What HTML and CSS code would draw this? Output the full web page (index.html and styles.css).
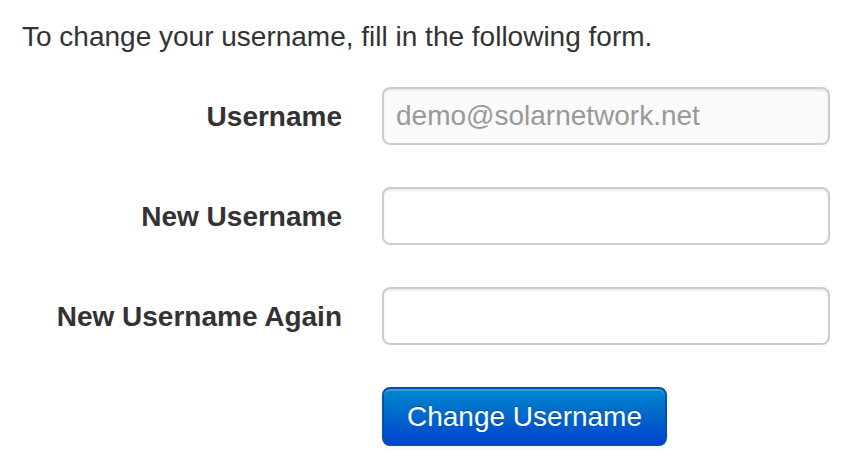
FILE: index.html
```html
<!DOCTYPE html>
<html>
<head>
<meta charset="utf-8">
<link rel="stylesheet" href="styles.css">
</head>
<body>
<div class="page">
  <p class="intro">To change your username, fill in the following form.</p>
  <form class="form">
    <div class="group">
      <label class="label">Username</label>
      <div class="controls"><input class="input input-disabled" type="text" value="demo@solarnetwork.net" disabled></div>
    </div>
    <div class="group">
      <label class="label">New Username</label>
      <div class="controls"><input class="input" type="text"></div>
    </div>
    <div class="group">
      <label class="label">New Username Again</label>
      <div class="controls"><input class="input" type="text"></div>
    </div>
    <div class="group">
      <div class="label"></div>
      <div class="controls"><button class="btn" type="button">Change Username</button></div>
    </div>
  </form>
</div>
</body>
</html>
```
FILE: styles.css
```css
html, body {
  margin: 0;
  padding: 0;
  background: #fff;
}
body {
  font-family: "Liberation Sans", Arial, sans-serif;
  font-size: 28px;
  line-height: 40px;
  color: #333;
}
.page {
  padding: 17px 22px 0 22px;
}
.intro {
  margin: 0 0 30px 0;
}
.form {
  margin: 0;
}
.group {
  display: flex;
  margin-bottom: 42px;
}
.label {
  width: 320px;
  flex: none;
  text-align: right;
  font-weight: bold;
  padding-top: 10px;
  box-sizing: border-box;
}
.controls {
  margin-left: 40px;
}
.input {
  box-sizing: border-box;
  width: 448px;
  height: 58px;
  padding: 8px 12px;
  border: 2px solid #ccc;
  border-radius: 8px;
  font-family: "Liberation Sans", Arial, sans-serif;
  font-size: 28px;
  line-height: 40px;
  color: #555;
  background: #fff;
  box-shadow: inset 0 2px 2px rgba(0,0,0,0.075);
  margin: 0;
  display: block;
}
.input-disabled {
  background: #fafafa;
  color: #999;
  -webkit-text-fill-color: #999;
  opacity: 1;
}
.btn {
  box-sizing: border-box;
  width: 285px;
  height: 59px;
  padding: 8px 0;
  text-align: center;
  font-family: "Liberation Sans", Arial, sans-serif;
  font-size: 28px;
  line-height: 40px;
  color: #fff;
  border: 2px solid #0050b8;
  border-radius: 8px;
  background: linear-gradient(to bottom, #0088cc, #0044cc);
  text-shadow: 0 -1px 0 rgba(0,0,0,0.25);
  box-shadow: inset 0 2px 0 rgba(255,255,255,0.2), 0 2px 4px rgba(0,0,0,0.05);
  margin: 0;
  cursor: pointer;
}
```
